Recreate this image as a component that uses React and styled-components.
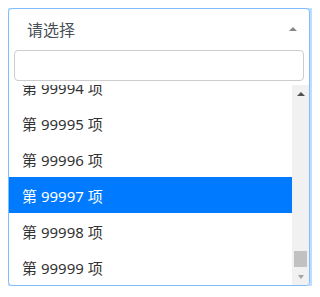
import styled, {createGlobalStyle} from 'styled-components'

const GlobalStyle = createGlobalStyle`
  body {
    margin: 8px;
    background: #fff;
    font-family: "Noto Sans", "Noto Sans CJK SC", sans-serif;
  }
`

const Select = styled.div`
  width: 302px;
  box-sizing: border-box;
  border: 1px solid #80bdff;
  border-radius: 4px;
  box-shadow: 0 0 0 3px rgba(0, 123, 255, 0.25);
  background: #fff;
  display: flex;
  flex-direction: column;
  overflow: hidden;
`

const Header = styled.div`
  height: 37px;
  display: flex;
  align-items: center;
  justify-content: space-between;
  padding: 2px 12px 0 18px;
  box-sizing: border-box;
  font-size: 16px;
  color: #495057;
`

const Caret = styled.span`
  width: 0;
  height: 0;
  border-left: 4px solid transparent;
  border-right: 4px solid transparent;
  border-bottom: 4px solid ${p => p.color || '#888'};
`

const Search = styled.input`
  display: block;
  height: 31px;
  margin: 4px 5px 4px 5px;
  box-sizing: border-box;
  border: 1px solid #ccc;
  border-radius: 4px;
  outline: none;
  padding: 0 8px;
  font-size: 15px;
`

const Body = styled.div`
  display: flex;
  height: 200px;
`

const List = styled.ul`
  flex: 1;
  margin: 0;
  padding: 0;
  list-style: none;
  display: flex;
  flex-direction: column;
  justify-content: flex-end;
  overflow: hidden;
`

const Item = styled.li`
  flex-shrink: 0;
  height: 36px;
  display: flex;
  align-items: center;
  padding: 1px 0 0 13px;
  box-sizing: border-box;
  font-size: 15px;
  color: ${p => (p.active ? '#fff' : '#333')};
  background: ${p => (p.active ? '#007bff' : 'transparent')};
`

const Scrollbar = styled.div`
  width: 17px;
  background: #f1f1f1;
  display: flex;
  flex-direction: column;
`

const ArrowButton = styled.div`
  height: 17px;
  display: flex;
  align-items: center;
  justify-content: center;
  padding-left: 1px;
`

const Track = styled.div`
  flex: 1;
  display: flex;
  flex-direction: column;
  justify-content: flex-end;
  align-items: center;
`

const Thumb = styled.div`
  width: 13px;
  height: 16px;
  margin-bottom: 1px;
  background: #c1c1c1;
`

const DownCaret = styled(Caret)`
  border-bottom: none;
  border-top: 4px solid #a3a3a3;
  border-left-width: 3.5px;
  border-right-width: 3.5px;
`

const items = [99994, 99995, 99996, 99997, 99998, 99999]

export default function App() {
  return (
    <>
      <GlobalStyle />
      <Select>
        <Header>
          <span>请选择</span>
          <Caret />
        </Header>
        <Search type="text" />
        <Body>
          <List>
            {items.map(n => (
              <Item key={n} active={n === 99997}>
                第 {n} 项
              </Item>
            ))}
          </List>
          <Scrollbar>
            <ArrowButton>
              <Caret color="#505050" />
            </ArrowButton>
            <Track>
              <Thumb />
            </Track>
            <ArrowButton>
              <DownCaret />
            </ArrowButton>
          </Scrollbar>
        </Body>
      </Select>
    </>
  )
}
